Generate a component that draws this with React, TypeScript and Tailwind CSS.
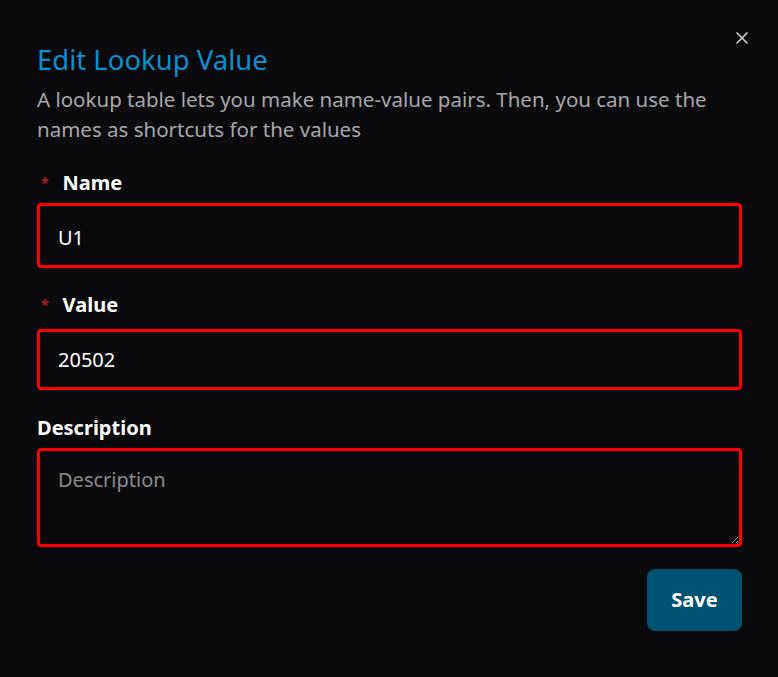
import { X } from "lucide-react";

const font = { fontFamily: '"Noto Sans", "Open Sans", sans-serif' };

function Label({ text, required }: { text: string; required?: boolean }) {
  return (
    <label className="flex items-center gap-[14px] text-[20px] leading-[28px] font-bold text-white">
      {required && <span className="pl-[4px] text-[14px] text-[#b3191c]">*</span>}
      {text}
    </label>
  );
}

export default function App() {
  return (
    <div className="relative min-h-screen w-full bg-[#0a0a0c]" style={font}>
      <button className="absolute right-[26px] top-[28px] text-[#cfcfd2]">
        <X className="h-[20px] w-[20px]" strokeWidth={2} />
      </button>
      <div className="flex flex-col pl-[37px] pr-[36px] pt-[42px]">
        <h1 className="text-[27.5px] leading-[36px] font-normal text-[#0b8fd0]">Edit Lookup Value</h1>
        <p className="mt-[6px] text-[20.5px] leading-[30px] text-[#a7a7ab]">
          A lookup table lets you make name-value pairs. Then, you can use the names as shortcuts for the values
        </p>

        <div className="mt-[25px] flex flex-col gap-[6px]">
          <Label text="Name" required />
          <input
            defaultValue="U1"
            className="h-[65px] w-full rounded-[4px] border-[3px] border-[#ff0000] bg-transparent px-[18px] pt-[3px] text-[20px] text-white outline-none"
          />
        </div>

        <div className="mt-[23px] flex flex-col gap-[10px]">
          <Label text="Value" required />
          <input
            defaultValue="20502"
            className="h-[61px] w-full rounded-[4px] border-[3px] border-[#ff0000] bg-transparent px-[18px] text-[20px] text-white outline-none"
          />
        </div>

        <div className="mt-[24px] flex flex-col gap-[6px]">
          <Label text="Description" />
          <textarea
            placeholder="Description"
            className="h-[99px] w-full rounded-[4px] border-[3px] border-[#ff0000] bg-transparent px-[18px] py-[14px] text-[20px] text-white outline-none placeholder:text-[#8a8a8f]"
          />
        </div>

        <div className="mt-[22px] flex justify-end">
          <button className="h-[62px] w-[95px] rounded-[8px] bg-[#005270] text-[20px] font-bold text-white">
            Save
          </button>
        </div>
      </div>
    </div>
  );
}
